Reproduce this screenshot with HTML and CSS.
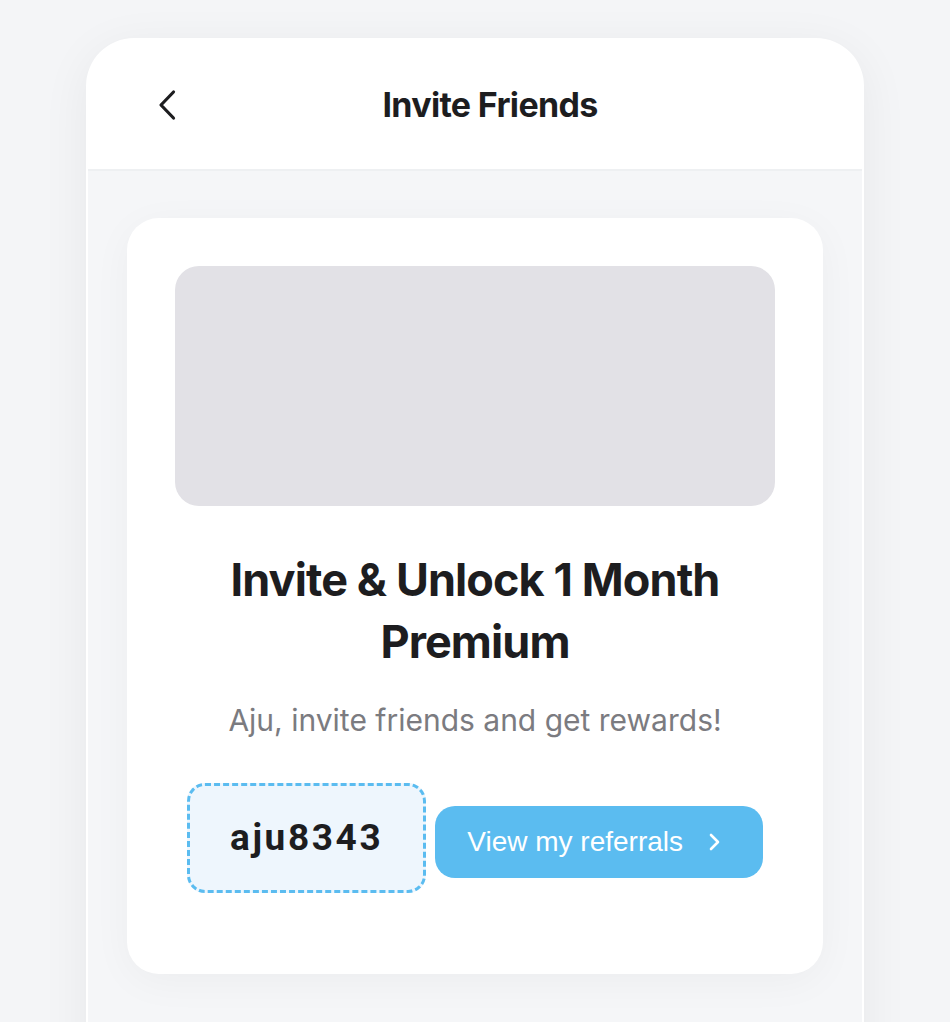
FILE: index.html
```html
<!DOCTYPE html>
<html lang="en">
<head>
    <meta charset="UTF-8">
    <meta name="viewport" content="width=device-width, initial-scale=1.0">
    <title>Invite Friends</title>
    <link rel="stylesheet" href="styles.css">
</head>
<body>
    <div class="phone">
        <!-- Top bar -->
        <header class="topbar">
            <button class="back-btn" aria-label="Back">
                <svg width="20" height="32" viewBox="0 0 20 32">
                    <path d="M15.5 3 L3 16 L15.5 29" fill="none" stroke="#1d1d1f" stroke-width="3.2" stroke-linecap="round" stroke-linejoin="round"/>
                </svg>
            </button>
            <h1 class="topbar-title">Invite Friends</h1>
        </header>

        <main class="content">
            <div class="invite-card">
                <div class="banner"></div>
                <h2 class="invite-title">Invite &amp; Unlock 1 Month Premium</h2>
                <p class="invite-sub">Aju, invite friends and get rewards!</p>
                <div class="invite-row">
                    <div class="code-box">aju8343</div>
                    <button class="referrals-btn">
                        <span>View my referrals</span>
                        <svg width="24" height="24" viewBox="0 0 24 24">
                            <path d="M8 5 L15 12 L8 19" fill="none" stroke="#fff" stroke-width="2.6" stroke-linecap="round" stroke-linejoin="round"/>
                        </svg>
                    </button>
                </div>
            </div>
        </main>
    </div>
</body>
</html>
```

FILE: styles.css
```css
body {
    margin: 0;
    padding: 38px 0 0;
    background: #f4f5f7;
    font-family: Inter, "Noto Sans", sans-serif;
    color: #1d1d1f;
    min-height: 100vh;
    box-sizing: border-box;
}
.phone {
    width: 774px;
    margin: 0 auto;
    background: #fff;
    border: 2px solid #fff;
    border-bottom: none;
    border-radius: 48px 48px 0 0;
    box-shadow: 0 10px 50px rgba(0, 0, 0, 0.06);
    overflow: hidden;
    min-height: 1000px;
}
.topbar {
    height: 129px;
    display: flex;
    align-items: center;
    padding: 0 66px 0 64px;
    background: #fff;
    border-bottom: 2px solid #eef0f2;
}
.back-btn {
    width: 32px;
    height: 40px;
    padding: 0;
    border: none;
    background: none;
    display: flex;
    align-items: center;
    justify-content: center;
    cursor: pointer;
}
.topbar-title {
    flex: 1;
    margin: 0;
    text-align: center;
    font-size: 34px;
    font-weight: 700;
    letter-spacing: -0.02em;
}
.content {
    background: #f5f6f8;
    padding: 47px 39px 48px;
    min-height: 900px;
}
.invite-card {
    background: #fff;
    border-radius: 32px;
    padding: 48px 48px 81px;
    box-shadow: 0 8px 40px rgba(0, 0, 0, 0.04);
    text-align: center;
}
.banner {
    height: 240px;
    background: #e2e1e6;
    border-radius: 24px;
}
.invite-title {
    margin: 43px 0 0;
    font-size: 45px;
    line-height: 62px;
    font-weight: 700;
    letter-spacing: -0.02em;
}
.invite-sub {
    margin: 26px 0 0;
    font-size: 30px;
    line-height: 42px;
    color: #7b7b80;
}
.invite-row {
    margin-top: 42px;
    display: flex;
    align-items: center;
    justify-content: center;
    gap: 9px;
}
.code-box {
    padding: 30px 40px;
    line-height: 44px;
    border: 3px dashed #5bbcf0;
    border-radius: 18px;
    background: #eef6fd;
    font-family: Roboto, "Liberation Sans", Arial, sans-serif;
    font-size: 37px;
    font-weight: 700;
    letter-spacing: 2.6px;
    color: #1d1d1f;
}
.referrals-btn {
    height: 72px;
    margin-top: 8px;
    display: flex;
    align-items: center;
    gap: 20px;
    padding: 0 36px 0 32px;
    border: none;
    border-radius: 20px;
    background: #5bbcf0;
    color: #fff;
    font-family: "Liberation Sans", Arial, sans-serif;
    font-size: 28px;
    cursor: pointer;
}
```
